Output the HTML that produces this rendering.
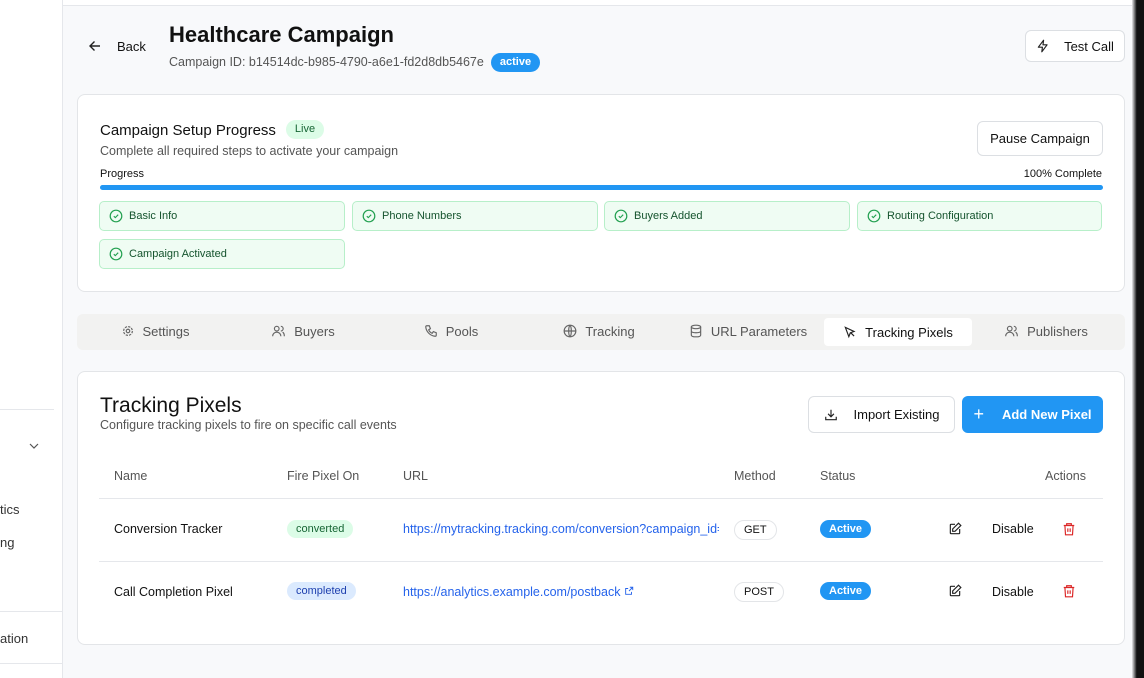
<!DOCTYPE html>
<html><head><meta charset="utf-8"><style>
*{box-sizing:border-box;margin:0;padding:0}
body{width:1144px;height:678px;overflow:hidden;background:#f8f9fb;font-family:"Liberation Sans",sans-serif;color:#111;position:relative}
.a{position:absolute}
.side{left:0;top:0;width:63px;height:678px;background:#fff;border-right:1px solid #e5e7eb}
.card{background:#fff;border:1px solid #e3e5e8;border-radius:8px}
.btn{background:#fff;border:1px solid #dcdfe3;border-radius:6px;font-size:13px;display:flex;align-items:center;justify-content:center}
.step{background:#effcf3;border:1px solid #b7efc9;border-radius:5px;font-size:11px;color:#14532d;display:flex;align-items:center;padding-left:9px;height:30px;width:246px}
.step svg{margin-right:6px}
.tab{top:316px;height:30px;font-size:13px;color:#555;display:flex;align-items:center;justify-content:center;gap:8px}
.th{font-size:12.5px;color:#555;top:469px}
.td{font-size:12.5px}
.pill{border-radius:10px;font-size:11px;padding:3px 9px}
svg{flex:none}
</style></head><body>
<div class="a side">
 <div class="a" style="left:0;top:409px;width:54px;border-top:1px solid #e5e7eb"></div>
 <svg class="a" style="left:28px;top:441px" width="12" height="10" viewBox="0 0 12 10"><path d="M2 3l4 4 4-4" stroke="#555" fill="none" stroke-width="1.2"/></svg>
 <div class="a" style="left:0;top:502px;font-size:13px;color:#333">tics</div>
 <div class="a" style="left:0;top:535px;font-size:13px;color:#333">ng</div>
 <div class="a" style="left:0;top:611px;width:63px;border-top:1px solid #e5e7eb"></div>
 <div class="a" style="left:0;top:631px;font-size:13px;color:#333">ation</div>
 <div class="a" style="left:0;top:663px;width:63px;border-top:1px solid #e5e7eb"></div>
</div>
<div class="a" style="left:63px;top:0;width:1073px;height:6px;background:#fff;border-bottom:1px solid #e5e7eb"></div>
<div class="a" style="left:1132px;top:0;width:12px;height:678px;background:linear-gradient(90deg,#e8e9eb,#111 40%,#111)"></div>

<svg class="a" style="left:88px;top:39px" width="14" height="14" viewBox="0 0 14 14"><path d="M12 7H2M6.5 2.5L2 7l4.5 4.5" stroke="#222" fill="none" stroke-width="1.4"/></svg>
<div class="a" style="left:117px;top:39px;font-size:13px">Back</div>
<div class="a" style="left:169px;top:22px;font-size:22px;font-weight:bold">Healthcare Campaign</div>
<div class="a" style="left:169px;top:55px;font-size:12.5px;color:#555">Campaign ID: b14514dc-b985-4790-a6e1-fd2d8db5467e</div>
<div class="a" style="left:491px;top:53px;width:49px;height:19px;background:#2196f3;border-radius:10px;color:#fff;font-size:11px;font-weight:bold;text-align:center;line-height:19px">active</div>
<div class="a btn" style="left:1025px;top:30px;width:100px;height:32px;gap:14px"><svg width="14" height="14" viewBox="0 0 24 24"><path d="M13 2L4 14h7l-1 8 9-12h-7z" stroke="#222" fill="none" stroke-width="2" stroke-linejoin="round"/></svg>Test Call</div>

<div class="a card" style="left:77px;top:94px;width:1048px;height:198px">
 <div class="a" style="left:22px;top:27px;font-size:15px">Campaign Setup Progress</div>
 <div class="a" style="left:208px;top:25px;width:38px;height:19px;background:#dcfce7;color:#166534;font-size:11px;border-radius:10px;text-align:center;line-height:19px">Live</div>
 <div class="a" style="left:22px;top:49px;font-size:12.5px;color:#555">Complete all required steps to activate your campaign</div>
 <div class="a btn" style="left:899px;top:26px;width:126px;height:35px">Pause Campaign</div>
 <div class="a" style="left:22px;top:73px;font-size:11px">Progress</div>
 <div class="a" style="right:22px;top:73px;font-size:11px">100% Complete</div>
 <div class="a" style="left:22px;top:90px;width:1003px;height:5px;background:#2196f3;border-radius:3px"></div>
</div>
<div class="a step" style="left:99px;top:201px"><svg width="14" height="14" viewBox="0 0 14 14"><circle cx="7" cy="7" r="5.8" stroke="#22a050" fill="none" stroke-width="1.2"/><path d="M4.8 7.2l1.5 1.4 2.9-2.9" stroke="#22a050" fill="none" stroke-width="1.1"/></svg>Basic Info</div>
<div class="a step" style="left:352px;top:201px"><svg width="14" height="14" viewBox="0 0 14 14"><circle cx="7" cy="7" r="5.8" stroke="#22a050" fill="none" stroke-width="1.2"/><path d="M4.8 7.2l1.5 1.4 2.9-2.9" stroke="#22a050" fill="none" stroke-width="1.1"/></svg>Phone Numbers</div>
<div class="a step" style="left:604px;top:201px"><svg width="14" height="14" viewBox="0 0 14 14"><circle cx="7" cy="7" r="5.8" stroke="#22a050" fill="none" stroke-width="1.2"/><path d="M4.8 7.2l1.5 1.4 2.9-2.9" stroke="#22a050" fill="none" stroke-width="1.1"/></svg>Buyers Added</div>
<div class="a step" style="left:857px;top:201px;width:245px"><svg width="14" height="14" viewBox="0 0 14 14"><circle cx="7" cy="7" r="5.8" stroke="#22a050" fill="none" stroke-width="1.2"/><path d="M4.8 7.2l1.5 1.4 2.9-2.9" stroke="#22a050" fill="none" stroke-width="1.1"/></svg>Routing Configuration</div>
<div class="a step" style="left:99px;top:239px"><svg width="14" height="14" viewBox="0 0 14 14"><circle cx="7" cy="7" r="5.8" stroke="#22a050" fill="none" stroke-width="1.2"/><path d="M4.8 7.2l1.5 1.4 2.9-2.9" stroke="#22a050" fill="none" stroke-width="1.1"/></svg>Campaign Activated</div>

<div class="a" style="left:77px;top:314px;width:1048px;height:36px;background:#f2f2f1;border-radius:6px"></div>
<div class="a tab" style="left:81px;width:148px"><svg width="14" height="14" viewBox="0 0 24 24" fill="none" stroke="#666" stroke-width="2"><circle cx="12" cy="12" r="3"/><circle cx="12" cy="12" r="7.5" stroke-dasharray="4 1.9"/></svg>Settings</div>
<div class="a tab" style="left:229px;width:148px"><svg width="15" height="14" viewBox="0 0 24 24" fill="none" stroke="#666" stroke-width="2"><circle cx="9" cy="8" r="4"/><path d="M2 21c0-4 3-7 7-7s7 3 7 7M16 4a4 4 0 010 8M19 14c2 1 3 4 3 7"/></svg>Buyers</div>
<div class="a tab" style="left:377px;width:148px"><svg width="14" height="14" viewBox="0 0 24 24" fill="none" stroke="#666" stroke-width="2"><path d="M5 3h4l2 5-3 2a11 11 0 006 6l2-3 5 2v4a2 2 0 01-2 2A18 18 0 013 5a2 2 0 012-2z"/></svg>Pools</div>
<div class="a tab" style="left:525px;width:148px"><svg width="14" height="14" viewBox="0 0 24 24" fill="none" stroke="#666" stroke-width="2"><circle cx="12" cy="12" r="10"/><path d="M2 12h20M12 2c3 3 3 17 0 20M12 2c-3 3-3 17 0 20"/></svg>Tracking</div>
<div class="a tab" style="left:673px;width:150px"><svg width="14" height="14" viewBox="0 0 24 24" fill="none" stroke="#666" stroke-width="2"><ellipse cx="12" cy="5" rx="8" ry="3"/><path d="M4 5v14c0 2 4 3 8 3s8-1 8-3V5M4 12c0 2 4 3 8 3s8-1 8-3"/></svg>URL Parameters</div>
<div class="a tab" style="left:824px;width:148px;top:318px;height:28px;background:#fff;border-radius:4px;color:#111"><svg width="14" height="14" viewBox="0 0 24 24" fill="none" stroke="#222" stroke-width="2"><path d="M4 4l6 16 2.5-6.5L19 11zM13 13l6 6"/></svg>Tracking Pixels</div>
<div class="a tab" style="left:972px;width:148px"><svg width="15" height="14" viewBox="0 0 24 24" fill="none" stroke="#666" stroke-width="2"><circle cx="9" cy="8" r="4"/><path d="M2 21c0-4 3-7 7-7s7 3 7 7M16 4a4 4 0 010 8M19 14c2 1 3 4 3 7"/></svg>Publishers</div>

<div class="a card" style="left:77px;top:371px;width:1048px;height:274px">
 <div class="a" style="left:22px;top:22px;font-size:21px">Tracking Pixels</div>
 <div class="a" style="left:22px;top:46px;font-size:12.5px;color:#555">Configure tracking pixels to fire on specific call events</div>
 <div class="a btn" style="left:730px;top:24px;width:147px;height:37px;gap:16px"><svg width="14" height="14" viewBox="0 0 24 24" fill="none" stroke="#222" stroke-width="2"><path d="M12 3v12M7 10l5 5 5-5M3 15v5h18v-5"/></svg>Import Existing</div>
 <div class="a" style="left:884px;top:24px;width:141px;height:37px;background:#2196f3;border-radius:6px;color:#fff;font-size:13px;font-weight:bold;display:flex;align-items:center;justify-content:center;gap:18px"><span style="font-weight:normal;font-size:18px">+</span>Add New Pixel</div>
 <div class="a" style="left:21px;top:126px;width:1004px;border-top:1px solid #e5e7eb"></div>
 <div class="a" style="left:21px;top:189px;width:1004px;border-top:1px solid #e5e7eb"></div>
</div>
<div class="a th" style="left:114px">Name</div>
<div class="a th" style="left:287px">Fire Pixel On</div>
<div class="a th" style="left:403px">URL</div>
<div class="a th" style="left:734px">Method</div>
<div class="a th" style="left:820px">Status</div>
<div class="a th" style="left:1045px">Actions</div>

<div class="a td" style="left:114px;top:522px">Conversion Tracker</div>
<div class="a pill" style="left:287px;top:520px;background:#dcfce7;color:#166534">converted</div>
<div class="a td" style="left:403px;top:522px;color:#2563eb;width:316px;overflow:hidden;white-space:nowrap">https://mytracking.tracking.com/conversion?campaign_id=1</div>
<div class="a pill" style="left:734px;top:520px;border:1px solid #e3e5e8;color:#111">GET</div>
<div class="a pill" style="left:820px;top:520px;background:#2196f3;color:#fff;font-weight:bold">Active</div>

<div class="a td" style="left:114px;top:585px">Call Completion Pixel</div>
<div class="a pill" style="left:287px;top:582px;background:#dbeafe;color:#1e40af">completed</div>
<div class="a td" style="left:403px;top:585px;color:#2563eb">https://analytics.example.com/postback <svg width="10" height="10" viewBox="0 0 24 24" fill="none" stroke="#2563eb" stroke-width="2.2"><path d="M14 3h7v7M21 3l-9 9M18 14v6H4V6h6"/></svg></div>
<div class="a pill" style="left:734px;top:582px;border:1px solid #e3e5e8;color:#111">POST</div>
<div class="a pill" style="left:820px;top:582px;background:#2196f3;color:#fff;font-weight:bold">Active</div>

<svg class="a" style="left:948px;top:522px" width="14" height="14" viewBox="0 0 24 24" fill="none" stroke="#222" stroke-width="2"><path d="M12 4H5a1 1 0 00-1 1v14a1 1 0 001 1h14a1 1 0 001-1v-7M18 2l4 4-10 10H8v-4z"/></svg>
<div class="a td" style="left:992px;top:522px">Disable</div>
<svg class="a" style="left:1062px;top:522px" width="14" height="14" viewBox="0 0 24 24" fill="none" stroke="#dc2626" stroke-width="2"><path d="M3 6h18M8 6V3h8v3M5 6l1 16h12l1-16M10 11v6M14 11v6"/></svg>
<svg class="a" style="left:948px;top:584px" width="14" height="14" viewBox="0 0 24 24" fill="none" stroke="#222" stroke-width="2"><path d="M12 4H5a1 1 0 00-1 1v14a1 1 0 001 1h14a1 1 0 001-1v-7M18 2l4 4-10 10H8v-4z"/></svg>
<div class="a td" style="left:992px;top:585px">Disable</div>
<svg class="a" style="left:1062px;top:584px" width="14" height="14" viewBox="0 0 24 24" fill="none" stroke="#dc2626" stroke-width="2"><path d="M3 6h18M8 6V3h8v3M5 6l1 16h12l1-16M10 11v6M14 11v6"/></svg>
</body></html>
